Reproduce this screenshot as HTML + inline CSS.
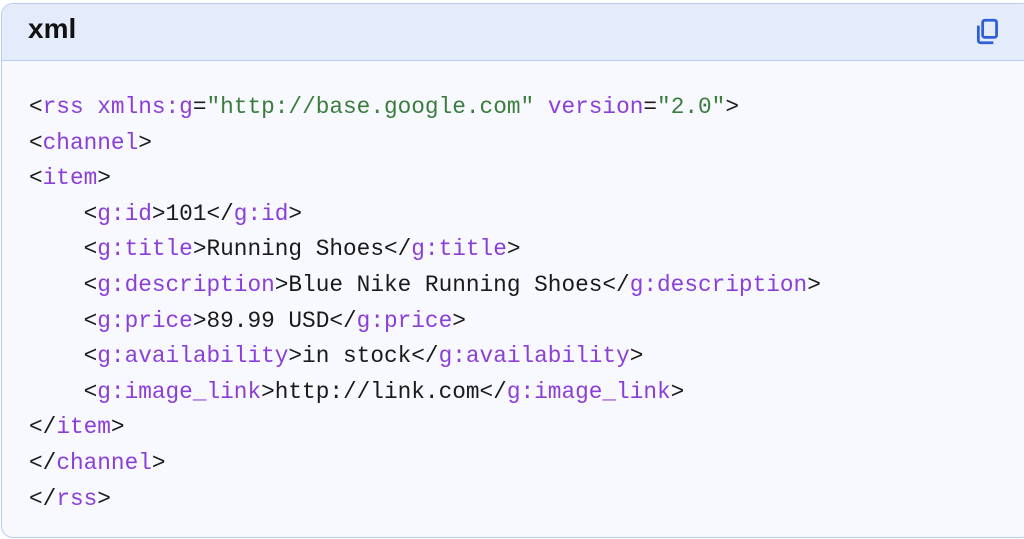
<!DOCTYPE html>
<html><head><meta charset="utf-8"><style>
html,body{margin:0;padding:0;background:#fff;width:1024px;height:539px;overflow:hidden}
.card{position:absolute;left:1px;top:3px;width:1030px;height:533px;border:1.5px solid #b8cdf4;border-radius:12px;background:#f8f9fe;overflow:hidden}
.hd{height:56px;background:#e4ebfb;border-bottom:1.5px solid #b8cdf4;position:relative}
.hd span{position:absolute;left:26px;top:9px;font:600 28px "Liberation Sans",sans-serif;color:#111}
.hd svg{position:absolute;left:972px;top:13px}
pre{margin:0;position:absolute;left:27px;top:86px;font:22.75px/35.6px "Liberation Mono",monospace;color:#1a1a1a}
.p{color:#8b3fd9}.g{color:#3a7d3c}
</style></head><body>
<div class="card">
<div class="hd"><span>xml</span>
<svg width="28" height="30" viewBox="0 0 26 28" fill="none" stroke="#2f5fd8" stroke-width="2.6"><rect x="8" y="3" width="13" height="16" rx="2"/><path d="M4 8v14a2 2 0 0 0 2 2h12"/></svg>
</div>
<pre>&lt;<span class="p">rss xmlns:g</span>=<span class="g">"http://base.google.com"</span> <span class="p">version</span>=<span class="g">"2.0"</span>&gt;
&lt;<span class="p">channel</span>&gt;
&lt;<span class="p">item</span>&gt;
    &lt;<span class="p">g:id</span>&gt;101&lt;/<span class="p">g:id</span>&gt;
    &lt;<span class="p">g:title</span>&gt;Running Shoes&lt;/<span class="p">g:title</span>&gt;
    &lt;<span class="p">g:description</span>&gt;Blue Nike Running Shoes&lt;/<span class="p">g:description</span>&gt;
    &lt;<span class="p">g:price</span>&gt;89.99 USD&lt;/<span class="p">g:price</span>&gt;
    &lt;<span class="p">g:availability</span>&gt;in stock&lt;/<span class="p">g:availability</span>&gt;
    &lt;<span class="p">g:image_link</span>&gt;http://link.com&lt;/<span class="p">g:image_link</span>&gt;
&lt;/<span class="p">item</span>&gt;
&lt;/<span class="p">channel</span>&gt;
&lt;/<span class="p">rss</span>&gt;</pre>
</div>
</body></html>
